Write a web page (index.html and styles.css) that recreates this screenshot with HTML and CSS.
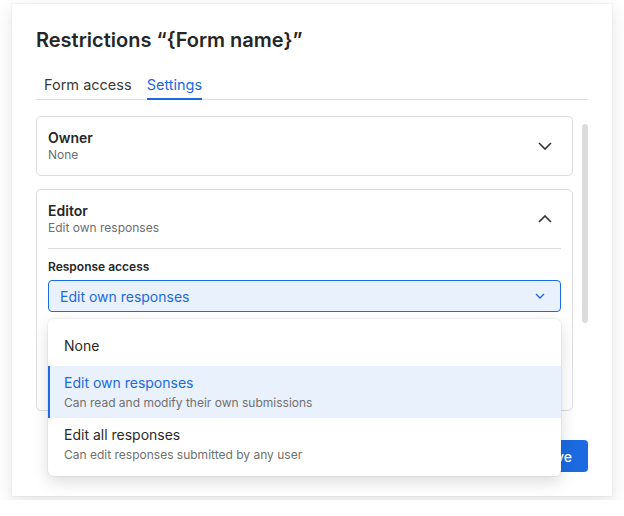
FILE: index.html
```html
<!DOCTYPE html>
<html>
<head>
<meta charset="utf-8">
<title>Restrictions</title>
<link rel="stylesheet" href="styles.css">
</head>
<body>
<div class="modal">
	<h1>Restrictions “{Form name}”</h1>

	<div class="tabs">
		<span class="tab">Form access</span>
		<span class="tab active">Settings</span>
	</div>

	<div class="scroll">
		<div class="roles">
			<div class="role">
				<div class="role-head">
					<div>
						<div class="role-name">Owner</div>
						<div class="role-value">None</div>
					</div>
					<svg class="chev" width="14" height="8" viewBox="0 0 14 8"><path d="M1 1l6 6 6-6" /></svg>
				</div>
			</div>

			<div class="role open">
				<div class="role-head">
					<div>
						<div class="role-name">Editor</div>
						<div class="role-value">Edit own responses</div>
					</div>
					<svg class="chev" width="14" height="8" viewBox="0 0 14 8"><path d="M1 7l6-6 6 6" /></svg>
				</div>
				<div class="role-body">
					<label class="field-label">Response access</label>
					<div class="select-wrap">
						<div class="select focused">
							<span>Edit own responses</span>
							<svg width="10" height="6" viewBox="0 0 10 6"><path d="M1 1l4 4 4-4" /></svg>
						</div>
						<ul class="menu">
							<li class="opt single">None</li>
							<li class="opt selected">
								<div class="opt-title">Edit own responses</div>
								<div class="opt-desc">Can read and modify their own submissions</div>
							</li>
							<li class="opt">
								<div class="opt-title">Edit all responses</div>
								<div class="opt-desc">Can edit responses submitted by any user</div>
							</li>
						</ul>
					</div>
				</div>
			</div>
		</div>
		<div class="scrollbar"></div>
	</div>

	<div class="footer">
		<button class="btn">Save</button>
	</div>
</div>
</body>
</html>
```

FILE: styles.css
```css
* {
	box-sizing: border-box;
}

body {
	margin: 0;
	padding: 4px 12px;
	background: #fff;
	font-family: Inter, 'Noto Sans', sans-serif;
	color: #2b2b2b;
}

.modal {
	width: 600px;
	height: 492px;
	padding: 22px 24px 24px;
	background: #fff;
	display: flex;
	flex-direction: column;
	box-shadow: 0 0 0 1px rgba(0,0,0,.03), 0 6px 18px rgba(0,0,0,.11);
}

h1 {
	margin: 0;
	font-size: 20px;
	line-height: 28px;
	font-weight: 600;
	color: #262626;
}

.tabs {
	display: flex;
	gap: 15px;
	margin-top: 16px;
	padding-left: 8px;
	border-bottom: 1px solid #dcdcdc;
}

.tab {
	font-size: 14.5px;
	line-height: 20px;
	padding: 5px 0 3px;
	margin-bottom: -1px;
	border-bottom: 2px solid transparent;
	color: #3a3a3a;
}

.tab.active {
	color: #1b6ae0;
	border-bottom-color: #1b6ae0;
}

.scroll {
	flex: 1;
	display: flex;
	gap: 9px;
	margin: 16px 0 16px;
	position: relative;
	z-index: 2;
}

.roles {
	flex: 1;
	display: flex;
	flex-direction: column;
	gap: 13px;
}

.scrollbar {
	width: 6px;
	height: 199px;
	margin-top: 8px;
	border-radius: 3px;
	background: #dcdcdc;
}

.role {
	border: 1px solid #dddddd;
	border-radius: 5px;
}

.role-head {
	display: flex;
	align-items: center;
	justify-content: space-between;
	padding: 12px 20px 12px 11px;
}

.role-name {
	font-size: 14px;
	line-height: 18px;
	font-weight: 600;
	color: #262626;
}

.role-value {
	font-size: 12px;
	line-height: 16px;
	color: #6e6e6e;
}

.chev path {
	fill: none;
	stroke: #333;
	stroke-width: 1.6;
}

.role-body {
	margin: 0 11px;
	padding: 10px 0 98px;
	border-top: 1px solid #dddddd;
}

.field-label {
	display: block;
	font-size: 12px;
	line-height: 16px;
	font-weight: 600;
	color: #262626;
	margin-bottom: 5px;
}

.select-wrap {
	position: relative;
}

.select {
	height: 32px;
	display: flex;
	align-items: center;
	justify-content: space-between;
	padding: 0 15px 0 11px;
	border: 1px solid #cfcfcf;
	border-radius: 4px;
	font-size: 14px;
	color: #2b2b2b;
}

.select path {
	fill: none;
	stroke: #555;
	stroke-width: 1.4;
}

.select.focused {
	border-color: #1b6ae0;
	background: #e9f1fd;
	color: #1b6ae0;
}

.select.focused path {
	stroke: #1b6ae0;
}

.menu {
	position: absolute;
	left: 0;
	right: 0;
	top: calc(100% + 7px);
	margin: 0;
	padding: 6px 0;
	list-style: none;
	background: #fff;
	border-radius: 6px;
	box-shadow: 0 0 0 1px rgba(0,0,0,.04), 0 6px 16px rgba(0,0,0,.14);
	z-index: 5;
}

.opt {
	padding: 7px 16px;
}

.opt.single {
	padding: 11px 16px 10px;
	font-size: 14px;
	line-height: 20px;
	color: #2b2b2b;
}

.opt.selected {
	background: #e9f1fd;
	box-shadow: inset 2px 0 0 #1b6ae0;
}

.opt-title {
	font-size: 14px;
	line-height: 20px;
	color: #2b2b2b;
}

.selected .opt-title {
	color: #1b6ae0;
}

.opt-desc {
	margin-top: 2px;
	font-size: 12px;
	line-height: 16px;
	color: #707070;
}

.footer {
	display: flex;
	justify-content: flex-end;
}

.btn {
	height: 32px;
	padding: 0 16px;
	border: 0;
	border-radius: 4px;
	background: #1b6ae0;
	color: #fff;
	font-family: inherit;
	font-size: 14px;
	font-weight: 500;
}
```
